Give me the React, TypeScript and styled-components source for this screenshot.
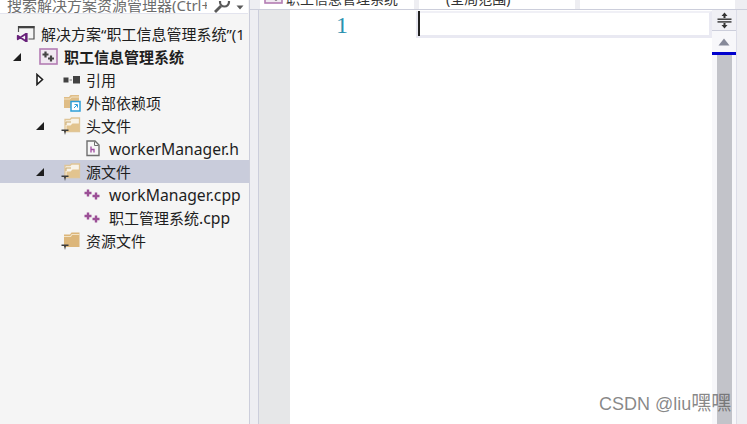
import React from "react";
import styled, { createGlobalStyle } from "styled-components";

const Global = createGlobalStyle`
  html, body { margin: 0; padding: 0; background: #fff; overflow: hidden; }
  * { box-sizing: border-box; }
`;

const Page = styled.div`
  position: relative;
  width: 747px;
  height: 424px;
  display: flex;
  overflow: hidden;
  font-family: "Noto Sans", "Noto Sans CJK SC", sans-serif;
  color: #1e1e1e;
`;

const Sidebar = styled.aside`
  width: 250px;
  height: 424px;
  flex: none;
  background: #f5f5f5;
  border-right: 1px solid #cccedb;
  display: flex;
  flex-direction: column;
`;

const Search = styled.div`
  height: 14px;
  width: 248px;
  background: #fff;
  border-bottom: 1px solid #e3e4ee;
  display: flex;
  align-items: flex-end;
  justify-content: space-between;
  padding: 0 4px 0 7px;
  overflow: hidden;
  flex: none;
`;

const SearchText = styled.span`
  font-size: 15px;
  line-height: 20px;
  height: 20px;
  margin-bottom: -2px;
  color: #6d6d6d;
  white-space: nowrap;
  overflow: hidden;
  width: 200px;
`;

const SearchIcons = styled.div`
  display: flex;
  align-items: center;
  gap: 5px;
`;

const Tree = styled.div`
  margin-top: 8px;
  display: flex;
  flex-direction: column;
`;

const Row = styled.div<{ $selected?: boolean }>`
  height: 23px;
  display: flex;
  align-items: center;
  background: ${(p) => (p.$selected ? "#c9ccdb" : "transparent")};
`;

const Slot = styled.div<{ $w: number }>`
  width: ${(p) => p.$w}px;
  flex: none;
  display: flex;
  align-items: center;
  justify-content: flex-end;
`;

const Label = styled.span<{ $bold?: boolean; $file?: boolean }>`
  font-size: ${(p) => (p.$file ? 15.7 : 15)}px;
  font-weight: ${(p) => (p.$bold ? 700 : 400)};
  white-space: nowrap;
  margin-left: ${(p) => (p.$file ? 8 : 5)}px;
  line-height: 20px;
`;

const CjkPart = styled.span`
  font-size: 15px;
`;

const Editor = styled.main`
  flex: 1;
  display: flex;
  flex-direction: column;
  background: #fff;
  min-width: 0;
`;

const TabBar = styled.div`
  height: 10px;
  flex: none;
  display: flex;
  gap: 5px;
  background: #eeeef2;
  border-bottom: 1px solid #cccedb;
  padding: 0 0 0 10px;
  overflow: hidden;
`;

const Drop = styled.div<{ $w: number; $pad: number }>`
  width: ${(p) => p.$w}px;
  height: 9px;
  background: #fff;
  flex: none;
  overflow: hidden;
  display: flex;
  align-items: flex-end;
  gap: 3px;
  padding-left: ${(p) => p.$pad}px;
`;

const DropIcon = styled.span`
  display: flex;
  margin-bottom: 5px;
`;

const DropText = styled.span`
  font-size: 14px;
  line-height: 18px;
  height: 18px;
  margin-bottom: 1px;
  white-space: nowrap;
  color: #333;
`;

const EditorBody = styled.div`
  flex: 1;
  display: flex;
  min-height: 0;
`;

const Frame = styled.div`
  width: 9px;
  flex: none;
  background: #eeeef2;
  border-right: 1px solid #cccedb;
`;

const Margin = styled.div`
  width: 31px;
  flex: none;
  background: #e6e7e8;
`;

const Code = styled.div`
  flex: 1;
  min-width: 0;
  display: flex;
  flex-direction: column;
`;

const LineRow = styled.div`
  height: 28px;
  display: flex;
  flex: none;
`;

const Gutter = styled.div`
  width: 126px;
  flex: none;
  text-align: right;
  padding: 2px 68px 0 0;
  color: #2b91af;
  font-family: "Liberation Serif", serif;
  font-size: 24px;
  line-height: 26px;
`;

const CurrentLine = styled.div`
  flex: 1;
  border: 3px solid #e9e9f2;
  border-top: 2px solid #f0f0f6;
  margin-top: 1px;
  position: relative;
  &::before {
    content: "";
    position: absolute;
    left: -1px;
    top: -2px;
    bottom: -1px;
    width: 2px;
    background: #222;
  }
`;

const Scroll = styled.div`
  width: 25px;
  flex: none;
  display: flex;
  flex-direction: column;
  border-right: 1px solid #dcdde8;
`;

const Split = styled.div`
  height: 21px;
  display: flex;
  align-items: center;
  justify-content: center;
  background: #f0f0f5;
  border-bottom: 1px solid #cccedb;
  flex: none;
`;

const ArrowCell = styled.div`
  height: 21px;
  background: #f7f7fa;
  display: flex;
  align-items: center;
  justify-content: center;
  flex: none;
`;

const BlueMark = styled.div`
  height: 3px;
  background: #0000cd;
  flex: none;
`;

const Track = styled.div`
  flex: 1;
  background: #f7f7fa;
  display: flex;
  padding-left: 5px;
`;

const Thumb = styled.div`
  width: 15px;
  background: #c2c3c9;
`;

const RightEdge = styled.div`
  width: 10px;
  flex: none;
  background: #eeeef2;
`;

const Watermark = styled.div`
  position: absolute;
  left: 599px;
  top: 393px;
  font-family: "Liberation Sans", "Noto Sans CJK SC", sans-serif;
  font-size: 18px;
  line-height: 20px;
  color: rgba(90, 90, 90, 0.72);
  white-space: nowrap;
`;

const WatermarkCjk = styled.span`
  font-size: 20px;
`;

const Triangle = ({ open }: { open?: boolean }) =>
  open ? (
    <svg width="10" height="10" viewBox="0 0 10 10"><path d="M9 1V9H1Z" fill="#1e1e1e" /></svg>
  ) : (
    <svg width="9" height="13" viewBox="0 0 9 13"><path d="M2 1.500L7.500 6.500L2 11.500Z" fill="#fff" stroke="#1e1e1e" strokeWidth="1.600" /></svg>
  );

const Folder = ({ hollow }: { hollow?: boolean }) => (
  <svg width="20" height="20" viewBox="0 0 20 20">
    {hollow ? (
      <>
        <path d="M4 3.500H9L10.500 2H18.500V15.500H4Z" fill="#f8f3e8" stroke="#e0c596" strokeWidth="1.300" />
        <path d="M5.500 15V9.500H9.500L11.500 7.500H18V15Z" fill="#e2c48f" />
        <path d="M5 9V6H10" fill="none" stroke="#c9a96f" strokeWidth="1" />
      </>
    ) : (
      <>
        <path d="M3 3.500H9L10.500 1.500H18.500V16H3Z" fill="#dcb67a" />
        <path d="M3 5.500H9.500L11 3.500H18.500" fill="none" stroke="#f2e3c6" strokeWidth="1.200" />
      </>
    )}
    <path d="M0.500 13.500H7.500V15H5L4 19L3 15H0.500Z" fill="#3c3c3c" />
  </svg>
);

const Plus = ({ x, y }: { x: number; y: number }) => (
  <path d={`M${x} ${y - 3.5}V${y + 3.500}M${x - 3.5} ${y}H${x + 3.500}`} stroke="#9b4f96" strokeWidth="2.400" fill="none" />
);

const CppIcon = () => (
  <svg width="18" height="12" viewBox="0 0 18 12">
    <Plus x={4} y={4} />
    <Plus x={12} y={7} />
  </svg>
);

const HeaderIcon = () => (
  <svg width="16" height="17" viewBox="0 0 16 17">
    <path d="M2 1H10L14 5V15.500H2Z" fill="#f6f6f6" stroke="#6f6f6f" strokeWidth="1.400" />
    <path d="M9.500 1.500V5.500H13.500" fill="none" stroke="#6f6f6f" />
    <path d="M6 6.500V12.500M6 9.500H9V12.500" stroke="#a04ca0" strokeWidth="1.300" fill="none" />
  </svg>
);

const RefIcon = () => (
  <svg width="18" height="10" viewBox="0 0 18 10">
    <rect x="0.500" y="2.500" width="5" height="5" fill="#424242" />
    <rect x="6.500" y="4.500" width="2.500" height="1" fill="#777" />
    <rect x="10" y="1" width="7" height="7.500" fill="#424242" />
  </svg>
);

const DepIcon = () => (
  <svg width="18" height="18" viewBox="0 0 18 18">
    <path d="M1 3H6L7.500 1H16V14H1Z" fill="#dfbd86" />
    <path d="M1 5H7L8.500 3H16" fill="none" stroke="#f2e3c6" />
    <rect x="8" y="7.500" width="9" height="9.500" fill="#fff" stroke="#2e9fd8" strokeWidth="1.500" />
    <path d="M11 14L14 11M11.500 10.500H14.500V13.500" stroke="#2e9fd8" strokeWidth="1" fill="none" />
  </svg>
);

const ProjectIcon = () => (
  <svg width="19" height="17" viewBox="0 0 19 17">
    <rect x="1" y="1" width="17" height="15" fill="#f0e8f1" stroke="#b37cb3" strokeWidth="1.600" />
    <path d="M6.500 3.500V9.500M3.500 6.500H9.500M12 7.500V13.500M9 10.500H15" stroke="#444" strokeWidth="2.200" fill="none" />
  </svg>
);

const SolutionIcon = () => (
  <svg width="20" height="18" viewBox="0 0 20 18">
    <path d="M2.500 7V1.500H18V14H12.500" fill="none" stroke="#505050" strokeWidth="1.200" />
    <rect x="2" y="1" width="16.500" height="2.300" fill="#424242" />
    <path d="M1.700 10.800V14.300L10 8.800V16.200Z" fill="none" stroke="#68217a" strokeWidth="1.700" strokeLinejoin="round" />
    <rect x="9.800" y="8" width="1.800" height="9" fill="#68217a" />
  </svg>
);

const SearchGlass = () => (
  <svg width="18" height="12" viewBox="0 0 18 12">
    <circle cx="11.500" cy="1" r="4.500" fill="none" stroke="#5a5a5a" strokeWidth="2.200" />
    <path d="M8 5L2 11" stroke="#5a5a5a" strokeWidth="2.800" />
  </svg>
);

const TinyDown = () => (
  <svg width="8" height="5" viewBox="0 0 8 5"><path d="M0.500 0.500H7.500L4 4.500Z" fill="#5a5a5a" /></svg>
);

const SplitIcon = () => (
  <svg width="15" height="17" viewBox="0 0 15 17">
    <path d="M7.500 0.500L10.500 4H8.500V6H6.500V4H4.500Z M7.500 16.500L10.500 13H8.500V11H6.500V13H4.500Z" fill="#333" />
    <rect x="0.500" y="6.500" width="14" height="1.400" fill="#333" />
    <rect x="0.500" y="9.200" width="14" height="1.400" fill="#333" />
  </svg>
);

const UpArrow = () => (
  <svg width="12" height="8" viewBox="0 0 12 8"><path d="M6 0.500L11.500 7.500H0.500Z" fill="#868999" /></svg>
);

export default function App() {
  return (
    <Page>
      <Global />
      <Sidebar>
        <Search>
          <SearchText>搜索解决方案资源管理器(Ctrl+;)</SearchText>
          <SearchIcons><SearchGlass /><TinyDown /></SearchIcons>
        </Search>
        <Tree>
          <Row>
            <Slot $w={36}><SolutionIcon /></Slot>
            <Label>解决方案“职工信息管理系统”(1</Label>
          </Row>
          <Row>
            <Slot $w={22}><Triangle open /></Slot>
            <Slot $w={36}><ProjectIcon /></Slot>
            <Label $bold style={{ marginLeft: 6 }}>职工信息管理系统</Label>
          </Row>
          <Row>
            <Slot $w={44}><Triangle /></Slot>
            <Slot $w={37}><RefIcon /></Slot>
            <Label>引用</Label>
          </Row>
          <Row>
            <Slot $w={81}><DepIcon /></Slot>
            <Label>外部依赖项</Label>
          </Row>
          <Row>
            <Slot $w={45}><Triangle open /></Slot>
            <Slot $w={36}><Folder hollow /></Slot>
            <Label>头文件</Label>
          </Row>
          <Row>
            <Slot $w={101}><HeaderIcon /></Slot>
            <Label $file>workerManager.h</Label>
          </Row>
          <Row $selected>
            <Slot $w={45}><Triangle open /></Slot>
            <Slot $w={36}><Folder hollow /></Slot>
            <Label>源文件</Label>
          </Row>
          <Row>
            <Slot $w={102}><CppIcon /></Slot>
            <Label $file style={{ marginLeft: 7 }}>workManager.cpp</Label>
          </Row>
          <Row>
            <Slot $w={102}><CppIcon /></Slot>
            <Label $file style={{ marginLeft: 7 }}><CjkPart>职工管理系统</CjkPart>.cpp</Label>
          </Row>
          <Row>
            <Slot $w={81}><Folder /></Slot>
            <Label>资源文件</Label>
          </Row>
        </Tree>
      </Sidebar>
      <Editor>
        <TabBar>
          <Drop $w={154} $pad={4}>
            <DropIcon><ProjectIcon /></DropIcon>
            <DropText>职工信息管理系统</DropText>
          </Drop>
          <Drop $w={156} $pad={27}><DropText>(全局范围)</DropText></Drop>
          <Drop $w={155} $pad={4} />
        </TabBar>
        <EditorBody>
          <Frame />
          <Margin />
          <Code>
            <LineRow>
              <Gutter>1</Gutter>
              <CurrentLine />
            </LineRow>
          </Code>
          <Scroll>
            <Split><SplitIcon /></Split>
            <ArrowCell><UpArrow /></ArrowCell>
            <BlueMark />
            <Track><Thumb /></Track>
          </Scroll>
          <RightEdge />
        </EditorBody>
      </Editor>
      <Watermark>CSDN @liu<WatermarkCjk>嘿嘿</WatermarkCjk></Watermark>
    </Page>
  );
}
